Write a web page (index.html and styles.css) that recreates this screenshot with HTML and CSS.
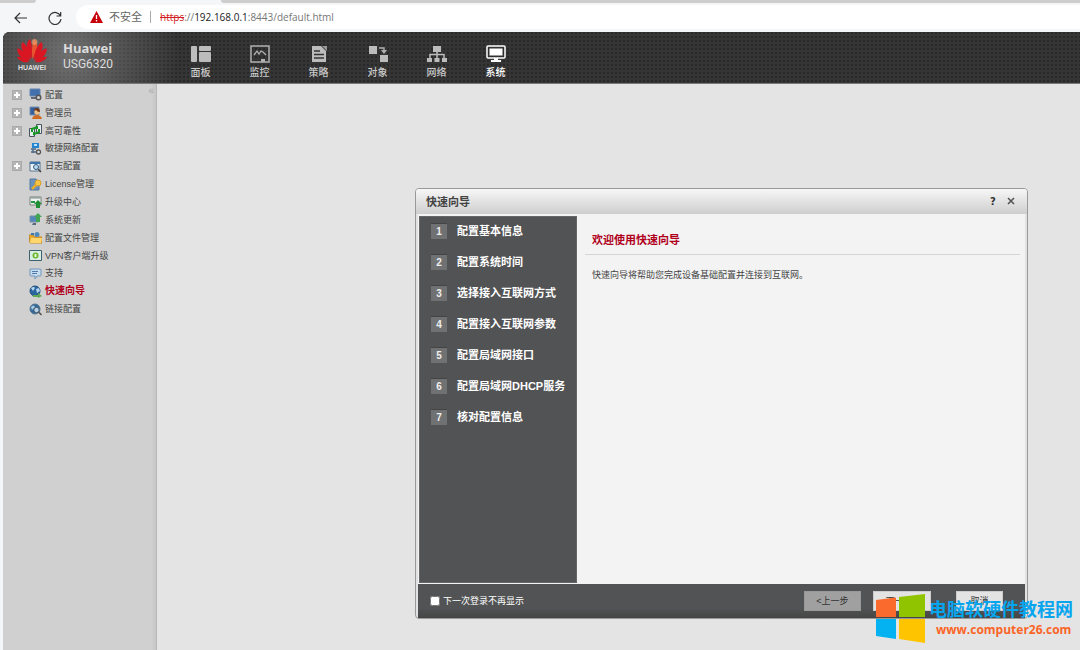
FILE: index.html
```html
<!DOCTYPE html>
<html lang="zh-CN">
<head>
<meta charset="utf-8">
<title>Huawei USG6320</title>
<link rel="stylesheet" href="styles.css">
</head>
<body>
<div class="browser">
  <div class="tabs"><span class="tab-left"></span><span class="tab-active"></span><span class="tab-rest"></span></div>
  <div class="toolbar">
    <button class="tool" type="button" aria-label="返回"><svg width="14" height="12" viewBox="0 0 14 12"><path d="M13 6H1M6 1 1 6l5 5" fill="none" stroke="#333" stroke-width="1.2"/></svg></button>
    <button class="tool" type="button" aria-label="刷新"><svg width="14" height="14" viewBox="0 0 14 14"><path d="M12.5 5A6 6 0 1 0 13 8M12.7 1v4H8.5" fill="none" stroke="#333" stroke-width="1.2"/></svg></button>
    <div class="address">
      <svg width="13" height="12" viewBox="0 0 13 12"><path d="M6.5 0 13 12H0z" fill="#c8000a"/><path d="M6.500 4v4M6.500 9v1.500" stroke="#fff" stroke-width="1.300"/></svg>
      <span class="unsafe">不安全</span>
      <span class="url"><s>https</s>://<b>192.168.0.1</b>:8443/default.html</span>
    </div>
  </div>
</div>
<div class="app">
  <header class="header">
    <div class="brand">
      <svg width="32" height="34" viewBox="0 0 32 34">
        <g fill="#d91722">
          <path d="M15.500 21C10 14 9 4 14 1c2 4 2.500 12 1.500 20z"/><path d="M16.500 21C22 14 23 4 18 1c-2 4-2.500 12-1.500 20z" fill="#e8552f"/>
          <path d="M14.500 22C8 18 3 9 6.500 4 11 7 14 15 14.500 22z"/><path d="M17.500 22C24 18 29 9 25.500 4 21 7 18 15 17.500 22z"/>
          <path d="M13.500 23C7 22 0 16 1.500 10 7 12 12 18 13.500 23z"/><path d="M18.500 23C25 22 32 16 30.500 10 25 12 20 18 18.500 23z"/>
          <path d="M13 24c-5 1-10-1-12-5 5-1 9 2 12 5zM19 24c5 1 10-1 12-5-5-1-9 2-12 5z"/>
        </g>
        <circle cx="18.500" cy="4" r="3" fill="#f0a878" opacity=".6"/>
        <text class="logo-text" x="16" y="32" text-anchor="middle">HUAWEI</text>
      </svg>
      <div class="names"><strong>Huawei</strong><span>USG6320</span></div>
    </div>
    <nav class="nav">
      <a href="#"><svg width="20" height="18" viewBox="0 0 20 18"><g fill="#bcbcbc"><rect y="1" width="6" height="16" rx="1"/><rect x="8" y="1" width="12" height="5" rx="1"/><rect x="8" y="7" width="12" height="10" rx="1"/></g></svg>面板</a>
      <a href="#"><svg width="20" height="18" viewBox="0 0 20 18"><rect x="1" y="1" width="18" height="16" fill="none" stroke="#b0b0b0" stroke-width="1.500"/><path d="M4 10l3-4 2 3 2-3 2 1 3 3" fill="none" stroke="#b0b0b0" stroke-width="1.300"/><path d="M11 14h4v3h-4z" fill="#b0b0b0"/></svg>监控</a>
      <a href="#"><svg width="20" height="18" viewBox="0 0 20 18"><path d="M3 1h9l5 5v11H3z" fill="#bcbcbc"/><path d="M13 1h5v5z" fill="#999"/><path d="M5 6h6M5 9.500h10M5 13h10" stroke="#333" stroke-width="1.300"/></svg>策略</a>
      <a href="#"><svg width="20" height="18" viewBox="0 0 20 18"><path d="M1 1h8v8H1zM12 10h8v7h-8z" fill="#bcbcbc"/><path d="M11 3h5v3" fill="none" stroke="#b0b0b0" stroke-width="1.400"/><path d="M13 5h6l-3 4z" fill="#b0b0b0"/></svg>对象</a>
      <a href="#"><svg width="20" height="18" viewBox="0 0 20 18"><path d="M6 1h8v6H6zM0 13h5v4H0zM7.500 13h5v4h-5zM15 13h5v4h-5z" fill="#bcbcbc"/><path d="M10 6v7M3 13V9.500h14V13" fill="none" stroke="#bcbcbc" stroke-width="1.500"/></svg>网络</a>
      <a class="current" href="#"><svg width="20" height="18" viewBox="0 0 20 18"><rect x="1" y="1" width="18" height="12" rx="1" fill="none" stroke="#fff" stroke-width="1.500"/><path d="M3.500 3.500h13v7h-13zM8 13h4v2h3v2H5v-2h3z" fill="#fff"/></svg>系统</a>
    </nav>
  </header>
  <div class="main">
    <aside class="sidebar">
      <span class="collapse">«</span>
      <ul class="tree">
        <li><button class="plus" type="button" aria-label="展开"></button><svg viewBox="0 0 13 13"><path d="M1 1h10v7H1z" fill="#426fae" stroke="#6785ac"/><path d="M2 10h5" stroke="#667" stroke-width="2"/><circle cx="9.500" cy="9.500" r="2.300" fill="#ccc" stroke="#555" stroke-width="1.400"/></svg><a href="#">配置</a></li>
        <li><button class="plus" type="button" aria-label="展开"></button><svg viewBox="0 0 13 13"><path d="M1 1h9v8H1z" fill="#345f9c" stroke="#7890ae"/><circle cx="8" cy="6" r="2.700" fill="#f4bf82"/><path d="M5 5q0-3 3-3t3 4q-3 0-4-2z" fill="#6e3a18"/><path d="M3 13q1-4 5-4t5 4z" fill="#cf6a22"/></svg><a href="#">管理员</a></li>
        <li><button class="plus" type="button" aria-label="展开"></button><svg viewBox="0 0 13 13"><path d="M.500 4.500h5v8h-5zM7.500.500h5v9h-5z" fill="#e7eef0" stroke="#4b535c"/><path d="M3 8V5l5-2v2M10 5v3l-5 2V8" fill="none" stroke="#189825" stroke-width="2"/></svg><a href="#">高可靠性</a></li>
        <li><span class="blank"></span><svg viewBox="0 0 13 13"><path d="M3 1h7v5H3z" fill="#2486d1"/><path d="M5 2h3v2H5z" fill="#bde0f8"/><path d="M2 7h5M2 10h5M4 7v4" stroke="#4d6b88" stroke-width="1.500"/><circle cx="9.500" cy="10" r="2" fill="#ddd" stroke="#555" stroke-width="1.300"/></svg><a href="#">敏捷网络配置</a></li>
        <li><button class="plus" type="button" aria-label="展开"></button><svg viewBox="0 0 13 13"><path d="M1 2h10v9H1z" fill="#eef4fa" stroke="#55728e"/><path d="M1 3h10" stroke="#3f75ad" stroke-width="2"/><circle cx="7" cy="7" r="2.500" fill="#bad7ee" stroke="#315c84"/><path d="m9 9 3 3" stroke="#444" stroke-width="1.500"/></svg><a href="#">日志配置</a></li>
        <li><span class="blank"></span><svg viewBox="0 0 13 13"><path d="M1 1h6l3 3v8H1z" fill="#6b91bd" stroke="#54789f"/><circle cx="9" cy="5" r="3" fill="#f5c545" stroke="#d79d26"/><path d="m7 7-4 4" stroke="#e5ac2b" stroke-width="2.500"/></svg><a href="#">License管理</a></li>
        <li><span class="blank"></span><svg viewBox="0 0 13 13"><path d="M1 2h11v8H1z" fill="#f0f3f1" stroke="#72817b"/><path d="M2 3h9" stroke="#819088"/><path d="M2 7h4" stroke="#289744" stroke-width="2"/><path d="m9 5 4 4h-2v4H7V9H5z" fill="#218e35"/></svg><a href="#">升级中心</a></li>
        <li><span class="blank"></span><svg viewBox="0 0 13 13"><path d="M1 3h8v6H1z" fill="#5486b8" stroke="#7692ae"/><path d="M4 10h3v2H3z" fill="#596878"/><path d="m9 0 4 4h-2v5H7V4H5z" fill="#43a551"/></svg><a href="#">系统更新</a></li>
        <li><span class="blank"></span><svg viewBox="0 0 13 13"><path d="M0 4h4l1 2h8v6H1z" fill="#e9ad35" stroke="#c4851b"/><circle cx="8" cy="3.500" r="2.500" fill="#4f8bb9"/><path d="M2 3h3" stroke="#3b79ac" stroke-width="2"/><path d="m2 7h11l-1 5H1z" fill="#ffd66c"/></svg><a href="#">配置文件管理</a></li>
        <li><span class="blank"></span><svg viewBox="0 0 13 13"><path d="M.500 1.500h12v10H.500z" fill="#d8eee2" stroke="#3e6170"/><circle cx="6.500" cy="6.500" r="3" fill="#67b62e"/><path d="M6.500 5v3" fill="none" stroke="#eaffdb" stroke-width="2"/></svg><a href="#">VPN客户端升级</a></li>
        <li><span class="blank"></span><svg viewBox="0 0 13 13"><path d="M1 2h10q1 0 1 1v5q0 1-1 1H8l-2 3V9H2Q1 9 1 8z" fill="#c5dbef" stroke="#7296b8"/><path d="M3 4.500h6M3 6.500h5" stroke="#527ca8"/></svg><a href="#">支持</a></li>
        <li class="selected"><span class="blank"></span><svg viewBox="0 0 13 13"><circle cx="6" cy="6" r="5" fill="#2b659e" stroke="#24507f"/><path d="M2 3q3-2 4 0L4 6zM7 4l3-1 1 3-3 2z" fill="#b2d6ef"/><path d="M4 10h5V8l4 3-4 2v-1H4z" fill="#60a852"/></svg><a href="#">快速向导</a></li>
        <li><span class="blank"></span><svg viewBox="0 0 13 13"><circle cx="6" cy="6" r="5" fill="#326998" stroke="#56748e"/><path d="M2 4q3-3 4 0L3 7z" fill="#a8cce4"/><circle cx="7.500" cy="7" r="2.700" fill="#b9d2e5" stroke="#455b70"/><path d="m9.500 9 3 3" stroke="#555" stroke-width="1.600"/></svg><a href="#">链接配置</a></li>
      </ul>
    </aside>
    <main class="content"></main>
  </div>
</div>
<section class="dialog" role="dialog" aria-labelledby="dialog-title">
  <div class="dialog-title"><h1 id="dialog-title">快速向导</h1><button type="button" aria-label="帮助">?</button><button type="button" aria-label="关闭"><svg width="8" height="8" viewBox="0 0 8 8"><path d="m1 1 6 6M7 1 1 7" stroke="#555" stroke-width="1.600"/></svg></button></div>
  <div class="dialog-body">
    <ol class="steps">
      <li><span>1</span>配置基本信息</li><li><span>2</span>配置系统时间</li><li><span>3</span>选择接入互联网方式</li><li><span>4</span>配置接入互联网参数</li><li><span>5</span>配置局域网接口</li><li><span>6</span>配置局域网DHCP服务</li><li><span>7</span>核对配置信息</li>
    </ol>
    <div class="welcome"><h2>欢迎使用快速向导</h2><p>快速向导将帮助您完成设备基础配置并连接到互联网。</p></div>
  </div>
  <div class="dialog-footer">
    <label><input type="checkbox">下一次登录不再显示</label>
    <button type="button" class="prev" disabled>&lt;上一步</button>
    <button type="button" class="next">下一步&gt;</button>
    <button type="button" class="cancel">取消</button>
  </div>
</section>
<div class="watermark">
  <svg width="50" height="50" viewBox="0 0 50 50"><path d="M0 6 20 3.500V23H0z" fill="#fb6a2d"/><path d="M23 3 49 0v23H23z" fill="#91c400"/><path d="M0 25h20v20L0 42z" fill="#04b2f2"/><path d="M23 25h26v24l-26-4z" fill="#ffc400"/></svg>
  <div><strong>电脑软硬件教程网</strong><span>www.computer26.com</span></div>
</div>
</body>
</html>
```
FILE: styles.css
```css
* { box-sizing: border-box; }
body { margin: 0; min-height: 100vh; display: flex; flex-direction: column; position: relative; overflow: hidden; background: #f5f6f7; color: #444; font: 9px/12px "Liberation Sans", "Noto Sans CJK SC", sans-serif; }
a { color: inherit; text-decoration: none; }
button { padding: 0; border: 0; background: none; font: inherit; color: inherit; }
ul, ol { list-style: none; margin: 0; padding: 0; }
h1, h2, p { margin: 0; }

.tabs { display: flex; height: 3px; }
.tab-left { width: 36px; background: #cdcdcd; border-bottom-right-radius: 3px; }
.tab-active { width: 185px; }
.tab-rest { flex: 1; background: #cdcdcd; border-bottom-left-radius: 3px; }
.toolbar { display: flex; align-items: center; height: 29px; padding-left: 14px; }
.tool { display: grid; place-items: center; width: 14px; margin-right: 20px; }
.address { flex: 1; display: flex; align-items: center; height: 24px; margin-left: -6px; margin-bottom: 1px; padding-left: 14px; background: #fff; border-radius: 12px 0 0 12px; }
.unsafe { margin-left: 6px; padding-right: 8px; border-right: 1px solid #aaa; color: #666; font-size: 11px; }
.url { margin-left: 9px; color: #777; font: 10px/14px "Open Sans", sans-serif; }
.url s { color: #d21b1b; }
.url b { color: #222; font-weight: 400; }

.app { flex: 1; display: flex; flex-direction: column; padding-left: 3px; }
.header { display: flex; height: 52px; border-radius: 6px 0 0 0; border-bottom: 1px solid #777; background: radial-gradient(circle 110px at 66px 22px, #9999, #9990), radial-gradient(circle at 1px 1px, #282828 1px, transparent 1px) 0 0 / 4px 4px, #353535; }
.brand { display: flex; width: 168px; padding: 6px 0 0 13px; gap: 15px; }
.logo-text { font: bold 7px "Liberation Sans", sans-serif; fill: #ddd; }
.names { display: flex; flex-direction: column; padding-top: 2px; color: #ddd; font: 12px/16px Roboto, sans-serif; }
.names strong { font: bold 13px/16px "Open Sans", sans-serif; }
.nav { display: flex; padding-top: 13px; }
.nav a { display: flex; flex-direction: column; align-items: center; gap: 4px; width: 59px; color: #c8c8c8; font-size: 10px; font-weight: 500; }
.nav .current { color: #fff; }
.main { flex: 1; display: flex; }
.sidebar { position: relative; width: 154px; padding: 2px 0 0 9px; background: linear-gradient(90deg, #d0d0d0 148px, #c6c6c6); border-right: 1px solid #b9b9b9; }
.collapse { position: absolute; top: 1px; right: 2px; color: #aaa; font-size: 10px; }
.tree { display: grid; grid-template-rows: repeat(13, 1fr); height: 232px; }
.tree li { display: flex; align-items: center; }
.tree svg { width: 13px; height: 13px; margin: 0 3px 0 7px; }
.plus, .blank { width: 10px; height: 10px; }
.plus { border: 1px solid #aaa; background: linear-gradient(#fff, #fff) center / 6px 2px no-repeat, linear-gradient(#fff, #fff) center / 2px 6px no-repeat, #b5b5b5; }
.tree .selected { color: #b0001c; font-size: 10px; font-weight: 700; }
.content { flex: 1; background: #e4e4e4; }

.dialog { position: absolute; left: 415px; top: 188px; width: 613px; padding: 0 2px; border: 1px solid #999; border-radius: 4px; background: #e2e2e2; }
.dialog-title { display: flex; align-items: center; height: 25px; margin: 0 -2px; padding: 0 12px 0 10px; gap: 10px; border-radius: 3px 3px 0 0; background: linear-gradient(#f7f7f7, #cecece); }
.dialog-title h1 { flex: 1; color: #444; font-size: 11px; line-height: 14px; }
.dialog-title button { width: 8px; color: #333; font: bold 10px/14px "DejaVu Sans", sans-serif; }
.dialog-body { display: flex; min-height: 370px; background: #f3f3f3; padding: 2px 0 1px 1px; }
.steps { width: 158px; padding: 0 0 0 11px; background: #525354; border: 1px solid #666; color: #fff; display: grid; grid-template-rows: repeat(7, 28px); row-gap: 3px; align-content: start; font-size: 11px; font-weight: 700; }
.steps li { display: flex; align-items: center; gap: 10px; }
.steps span { width: 16px; height: 16px; background: #707172; border-top: 1px solid #444; text-align: center; font: bold 10px/15px "Liberation Sans", sans-serif; color: #eee; }
.welcome { flex: 1; padding: 18px 5px 0 8px; }
.welcome h2 { padding: 0 0 8px 7px; border-bottom: 1px solid #d5d5d5; color: #b0001c; font-size: 11px; line-height: 12px; }
.welcome p { padding: 14px 7px; }
.dialog-footer { display: flex; align-items: center; height: 34px; padding: 0 22px 0 12px; background: linear-gradient(#525354 24px, #454545); }
.dialog-footer label { flex: 1; display: flex; align-items: center; gap: 3px; color: #fff; }
.dialog-footer input { width: 10px; height: 10px; margin: 0; }
.dialog-footer button { height: 20px; background: #e3e3e3; border: 1px solid #ccc; color: #333; }
.dialog-footer .prev { width: 57px; background: #a0a0a0; border-color: #999; margin-right: 12px; }
.dialog-footer .next { width: 58px; margin-right: 25px; }
.dialog-footer .cancel { width: 47px; }

.watermark { position: absolute; left: 876px; top: 594px; display: flex; gap: 3px; white-space: nowrap; pointer-events: none; }
.watermark div { display: flex; flex-direction: column; padding-top: 4px; }
.watermark strong { color: #08a5ef; font-size: 18px; line-height: 24px; }
.watermark span { padding-left: 7px; color: #fb6427; font: bold 12px/16px "Open Sans", sans-serif; }
```
